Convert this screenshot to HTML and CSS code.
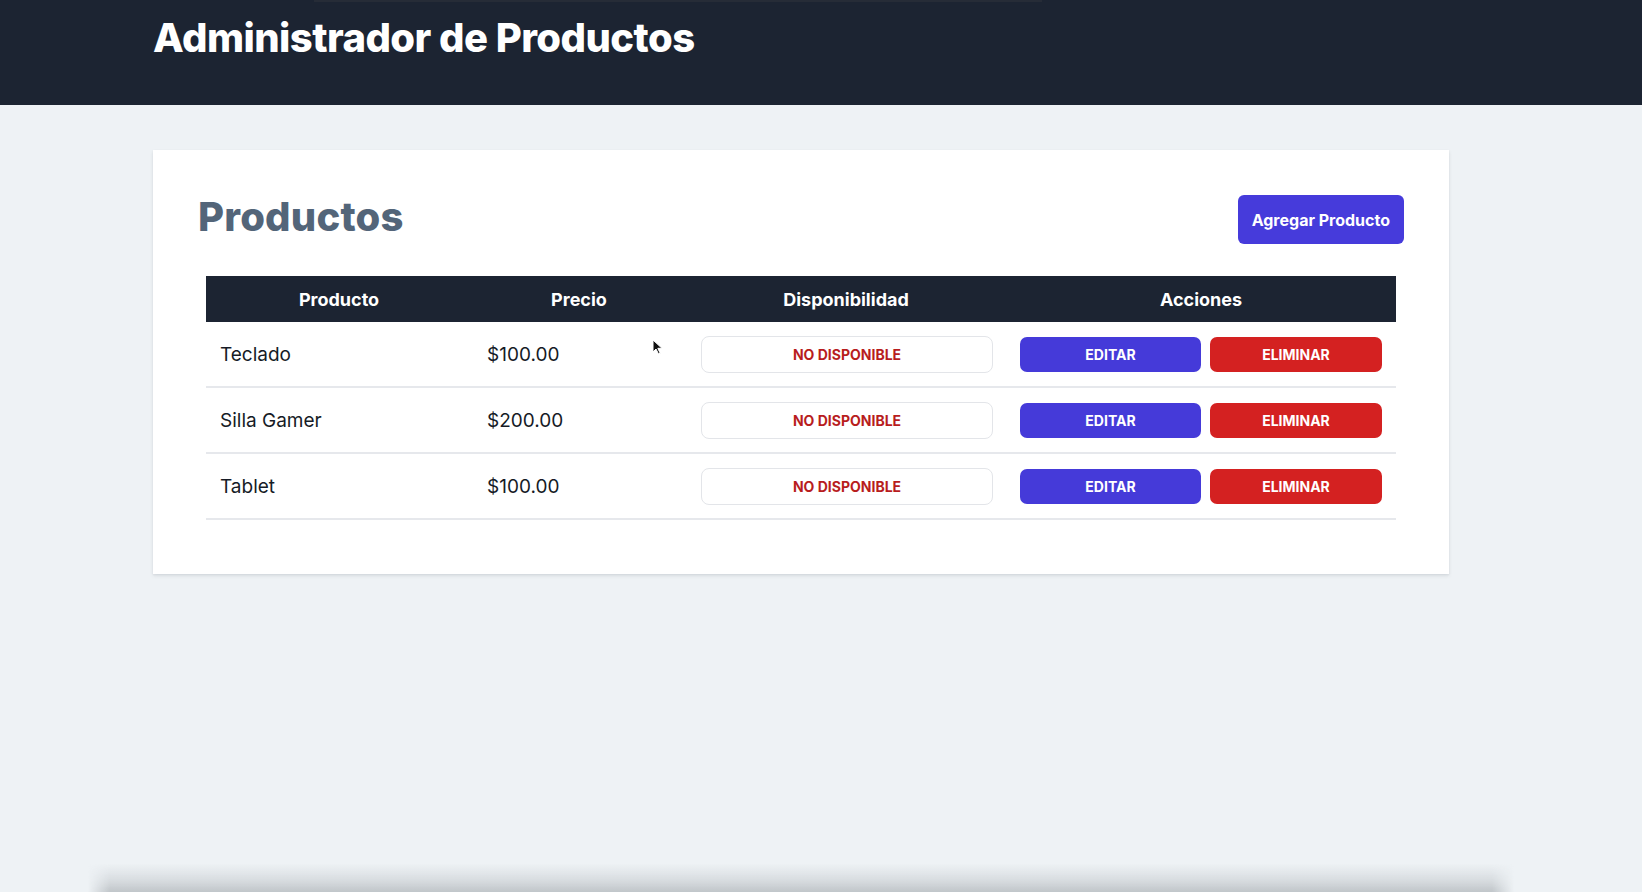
FILE: index.html
```html
<!DOCTYPE html>
<html lang="es">
<head>
<meta charset="utf-8">
<title>Administrador de Productos</title>
<link rel="stylesheet" href="styles.css">
</head>
<body>
<header class="topbar">
  <span class="tab-line"></span>
  <div class="topbar-inner">
    <h1 class="app-title">Administrador de Productos</h1>
  </div>
</header>

<main class="page">
  <section class="card">
    <div class="card-head">
      <h2 class="card-title">Productos</h2>
      <button class="btn-add">Agregar Producto</button>
    </div>

    <div class="table-wrap">
      <table class="products">
        <colgroup>
          <col class="c-prod"><col class="c-price"><col class="c-avail"><col class="c-act">
        </colgroup>
        <thead>
          <tr><th>Producto</th><th>Precio</th><th>Disponibilidad</th><th>Acciones</th></tr>
        </thead>
        <tbody>
          <tr>
            <td class="name">Teclado</td>
            <td class="price">$100.00</td>
            <td><span class="badge">NO DISPONIBLE</span></td>
            <td><div class="actions"><button class="btn-edit">EDITAR</button><button class="btn-del">ELIMINAR</button></div></td>
          </tr>
          <tr>
            <td class="name">Silla Gamer</td>
            <td class="price">$200.00</td>
            <td><span class="badge">NO DISPONIBLE</span></td>
            <td><div class="actions"><button class="btn-edit">EDITAR</button><button class="btn-del">ELIMINAR</button></div></td>
          </tr>
          <tr>
            <td class="name">Tablet</td>
            <td class="price">$100.00</td>
            <td><span class="badge">NO DISPONIBLE</span></td>
            <td><div class="actions"><button class="btn-edit">EDITAR</button><button class="btn-del">ELIMINAR</button></div></td>
          </tr>
        </tbody>
      </table>
    </div>
  </section>
</main>

<svg class="cursor" width="12" height="16" viewBox="0 0 12 16" aria-hidden="true">
  <path d="M1 1 L1 13 L4 10 L6.5 15 L8.2 14.2 L5.8 9.3 L10 9.3 Z" fill="#111" stroke="#fff" stroke-width="1"/>
</svg>
<div class="bottom-shade"></div>
</body>
</html>
```

FILE: styles.css
```css
* { box-sizing: border-box; }

html, body {
  margin: 0;
  padding: 0;
}

body {
  background: #eef2f5;
  font-family: Inter, "Noto Sans", "Liberation Sans", sans-serif;
  color: #161b26;
  width: 1642px;
  height: 892px;
  overflow: hidden;
  position: relative;
}

.topbar {
  position: relative;
  background: #1c2432;
  height: 105px;
}

.tab-line {
  position: absolute;
  top: 0;
  left: 314px;
  width: 728px;
  height: 2px;
  background: #262c37;
}

.topbar-inner {
  padding: 14px 0 0 153px;
}

.app-title {
  margin: 0;
  font-size: 40px;
  line-height: 48px;
  font-weight: 800;
  color: #ffffff;
  letter-spacing: -0.55px;
}

.page {
  padding: 45px 0 0 153px;
}

.card {
  width: 1296px;
  background: #ffffff;
  padding: 45px 45px 54px;
  box-shadow: 0 2px 4px rgba(15, 23, 42, 0.08), 0 1px 2px rgba(15, 23, 42, 0.06);
}

.card-head {
  display: flex;
  justify-content: space-between;
  align-items: flex-start;
}

.card-title {
  margin: -2px 0 0;
  font-size: 40px;
  line-height: 48px;
  font-weight: 800;
  color: #536579;
  letter-spacing: 0.2px;
}

.btn-add {
  height: 49px;
  padding: 0 14px;
  border: none;
  border-radius: 6px;
  background: #463bdb;
  color: #ffffff;
  font-family: inherit;
  font-size: 16px;
  font-weight: 700;
}

.table-wrap {
  padding: 0 8px;
  margin-top: 32px;
}

.products {
  width: 1190px;
  table-layout: fixed;
  border-collapse: separate;
  border-spacing: 0;
}

.c-prod { width: 266px; }
.c-price { width: 214px; }
.c-avail { width: 320px; }
.c-act { width: 390px; }

.products th {
  height: 46px;
  background: #1c2432;
  color: #ffffff;
  font-size: 18px;
  font-weight: 700;
  text-align: center;
  padding: 0;
}

.products td {
  height: 66px;
  padding: 0 14px;
  border-bottom: 2px solid #e6e8ec;
  vertical-align: middle;
  font-size: 19px;
  color: #161b26;
}

.products td.price {
  padding-left: 15px;
}

.badge {
  display: flex;
  align-items: center;
  justify-content: center;
  height: 37px;
  width: 292px;
  border: 1.5px solid #e3e5e9;
  border-radius: 8px;
  color: #b81d1d;
  font-size: 14px;
  font-weight: 700;
  margin-left: 1px;
}

.actions {
  display: flex;
  gap: 9px;
}

.btn-edit,
.btn-del {
  height: 35px;
  border: none;
  border-radius: 7px;
  color: #ffffff;
  font-family: inherit;
  font-size: 14px;
  font-weight: 700;
  padding: 0;
}

.btn-edit {
  width: 181px;
  background: #453ad9;
}

.btn-del {
  flex: 1;
  background: #d42121;
}

.cursor {
  position: absolute;
  left: 652px;
  top: 339px;
}

.bottom-shade {
  position: absolute;
  left: 88px;
  top: 864px;
  width: 1426px;
  height: 28px;
  background: linear-gradient(to bottom, rgba(200, 205, 209, 0), rgba(200, 205, 209, 0.55) 55%, rgba(190, 195, 199, 0.95));
  -webkit-mask-image: linear-gradient(to right, transparent, #000 22px, #000 calc(100% - 22px), transparent);
  mask-image: linear-gradient(to right, transparent, #000 22px, #000 calc(100% - 22px), transparent);
}
```
